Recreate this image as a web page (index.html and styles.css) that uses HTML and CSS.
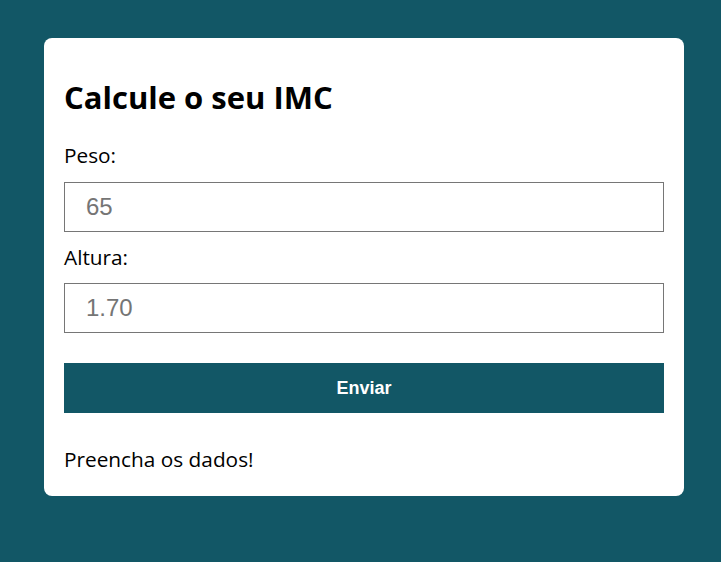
FILE: index.html
```html
<!DOCTYPE html>
<html lang="pt">
<head>
<meta charset="utf-8">
<title>Calculadora IMC</title>
<link rel="stylesheet" href="styles.css">
</head>
<body>
<main class="card">
  <h2 class="title">Calcule o seu IMC</h2>
  <label class="label" for="peso">Peso:</label>
  <input class="field" id="peso" type="text" placeholder="65">
  <label class="label" for="altura">Altura:</label>
  <input class="field" id="altura" type="text" placeholder="1.70">
  <button class="btn" type="button">Enviar</button>
  <p class="result">Preencha os dados!</p>
</main>
</body>
</html>
```
FILE: styles.css
```css
* { box-sizing: border-box; }
html, body { margin: 0; padding: 0; }
body {
  background: #125766;
  font-family: "Open Sans", sans-serif;
  min-height: 562px;
  padding: 38px 37px 0 44px;
}
.card {
  width: 640px;
  background: #fff;
  border-radius: 8px;
  padding: 20px 20px 23px;
  display: flex;
  flex-direction: column;
}
.title {
  font-size: 31px;
  font-weight: 700;
  margin: 18px 0 0;
  color: #000;
}
.label {
  font-size: 20.8px;
  color: #000;
}
.title + .label { margin-top: 23px; }
.field + .label { margin-top: 11px; }
.field {
  height: 50px;
  width: 600px;
  margin-top: 12.5px;
  border: 1px solid #767676;
  border-radius: 0;
  padding: 0 20px 0 21px;
  font-family: "Liberation Sans", Arial, sans-serif;
  font-size: 24px;
  color: #000;
  background: #fff;
}
.field::placeholder { color: #757575; }
.btn {
  margin-top: 30px;
  height: 50px;
  width: 600px;
  border: 0;
  background: #125766;
  color: #fff;
  font-family: "Liberation Sans", Arial, sans-serif;
  font-size: 18px;
  font-weight: 700;
}
.result {
  margin: 32px 0 0;
  font-size: 20.8px;
  color: #000;
}
```
